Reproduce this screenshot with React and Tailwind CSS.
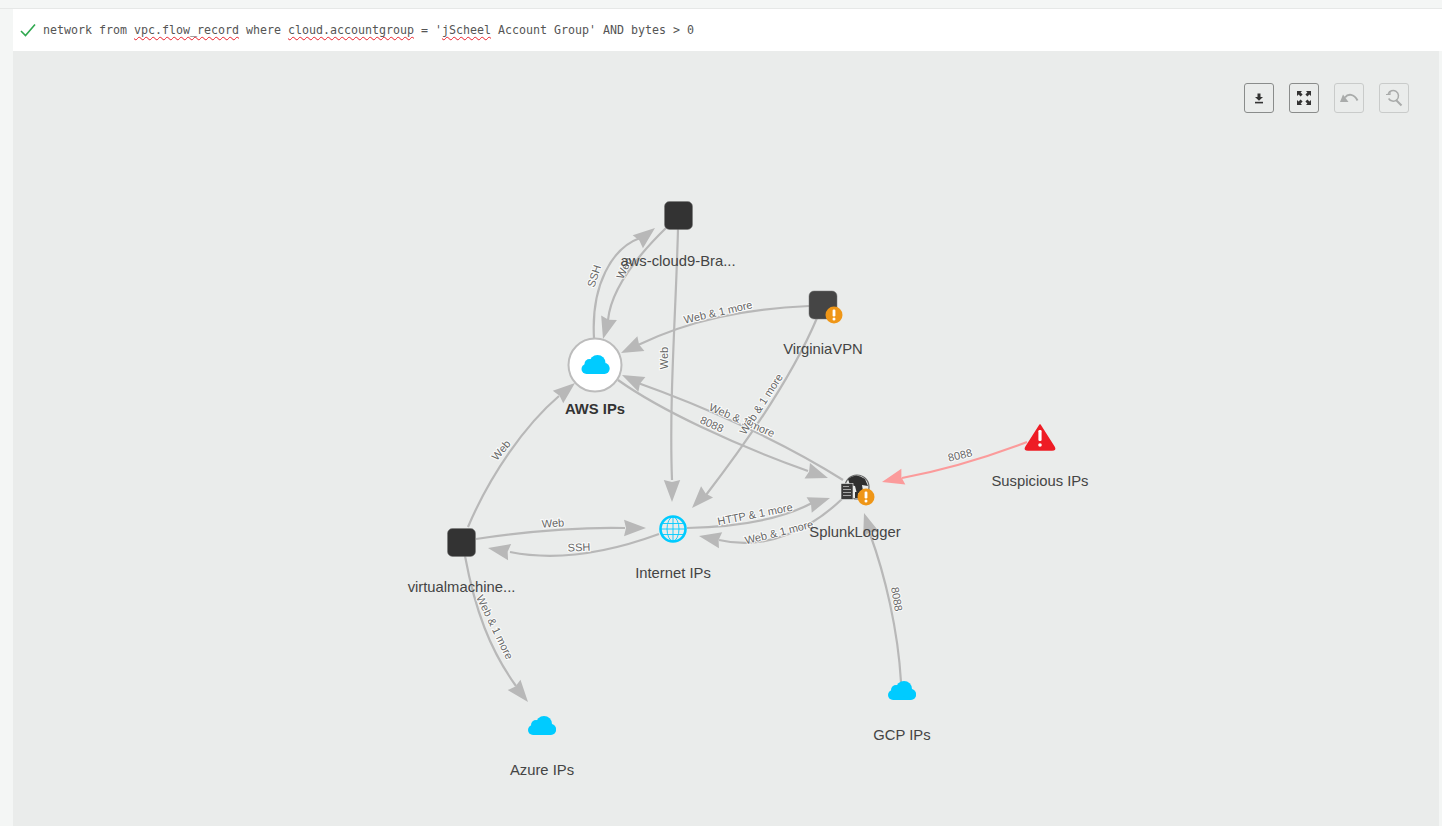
const GREY = "#b8b8b8";

const edges = [
  { d: "M594 338 C591 285 612 248 640 238", head: [655, 228, 640, 240], c: GREY },
  { d: "M667 227 C635 258 611 290 608 320", head: [603, 339, 609, 318], c: GREY },
  { d: "M678 229 C676 310 669 400 672 480", head: [672, 502, 672, 480], c: GREY },
  { d: "M809 306 C745 309 690 320 638 345", head: [621, 353, 640, 344], c: GREY },
  { d: "M817 318 C795 370 760 425 706 495", head: [692, 508, 707, 492], c: GREY },
  { d: "M843 480 C780 440 700 405 638 383", head: [622, 375, 641, 384], c: GREY },
  { d: "M618 380 C660 410 735 445 808 471", head: [828, 478, 808, 471], c: GREY },
  { d: "M687 528 C735 527 780 520 812 503", head: [830, 498, 812, 504], c: GREY },
  { d: "M842 499 C815 525 770 552 719 540", head: [699, 536, 719, 540], c: GREY },
  { d: "M1027 442 C985 458 945 470 902 478", head: [882, 482, 902, 477], c: "#fb9b9b" },
  { d: "M901 682 C898 630 885 575 870 534", head: [864, 513, 871, 534], c: GREY },
  { d: "M468 527 C490 475 525 425 559 396", head: [575, 383, 558, 397], c: GREY },
  { d: "M476 539 C530 531 580 527 625 528", head: [646, 528, 625, 528], c: GREY },
  { d: "M659 534 C610 552 560 562 510 552", head: [488, 548, 509, 552], c: GREY },
  { d: "M465 556 C475 610 490 650 516 686", head: [528, 702, 515, 686], c: GREY },
];

const edgeLabels = [
  ["SSH", 594, 276, -72],
  ["Web", 624, 268, -66],
  ["Web & 1 more", 718, 312, -13],
  ["Web", 664, 358, -90],
  ["Web & 1 more", 742, 420, 23],
  ["8088", 712, 424, 24],
  ["Web & 1 more", 761, 404, -57],
  ["HTTP & 1 more", 755, 514, -11],
  ["Web & 1 more", 779, 532, -14],
  ["8088", 960, 455, -14],
  ["8088", 897, 599, 80],
  ["Web", 501, 450, -50],
  ["Web", 553, 523, -4],
  ["SSH", 579, 547, -2],
  ["Web & 1 more", 495, 627, 64],
];

const nodeLabels = [
  ["aws-cloud9-Bra...", 678, 265.5],
  ["VirginiaVPN", 823, 354],
  ["Internet IPs", 673, 578],
  ["SplunkLogger", 855, 537],
  ["Suspicious IPs", 1040, 486],
  ["virtualmachine...", 461.5, 592],
  ["Azure IPs", 542, 775],
  ["GCP IPs", 902, 740],
];

function Head({ points, color }) {
  const [tx, ty, bx, by] = points;
  const dx = tx - bx;
  const dy = ty - by;
  const len = Math.hypot(dx, dy);
  const ux = dx / len;
  const uy = dy / len;
  const w = 8.2;
  const backX = tx - ux * 22;
  const backY = ty - uy * 22;
  const notchX = tx - ux * 20;
  const notchY = ty - uy * 20;
  return (
    <polygon
      fill={color}
      points={`${tx},${ty} ${backX - uy * w},${backY + ux * w} ${notchX},${notchY} ${backX + uy * w},${backY - ux * w}`}
    />
  );
}

function Cloud({ cx, cy }) {
  return (
    <g transform={`translate(${cx - 14} ${cy - 10})`} fill="#00cbff">
      <rect x="0" y="9" width="28" height="10" rx="5" />
      <circle cx="8" cy="9" r="5" />
      <circle cx="16" cy="8" r="8" />
      <circle cx="23" cy="13" r="5" />
    </g>
  );
}

function Badge({ cx, cy }) {
  return (
    <g>
      <circle cx={cx} cy={cy} r="8.5" fill="#ef9617" />
      <rect x={cx - 1.4} y={cy - 5.5} width="2.8" height="7" rx="1.2" fill="#fff" />
      <circle cx={cx} cy={cy + 4} r="1.5" fill="#fff" />
    </g>
  );
}

function Square({ cx, cy, fill }) {
  return <rect x={cx - 14} y={cy - 14} width="28" height="28" rx="5" fill={fill} stroke="#777" strokeWidth="0.5" />;
}

function Graph() {
  return (
    <svg
      className="absolute left-0 top-0 w-[1426px] h-[775px]"
      viewBox="13 51 1426 775"
      style={{ fontFamily: '"Liberation Sans", Arial, sans-serif' }}
    >
      {edges.map((e, i) => (
        <g key={i}>
          <path d={e.d} fill="none" stroke={e.c} strokeWidth="2.2" />
          <Head points={e.head} color={e.c} />
        </g>
      ))}

      {edgeLabels.map(([t, x, y, r], i) => (
        <text
          key={i}
          transform={`translate(${x} ${y}) rotate(${r})`}
          textAnchor="middle"
          dominantBaseline="central"
          fontSize="11"
          fill="#666666"
          stroke="#ffffff"
          strokeWidth="2"
          strokeOpacity="0.85"
          paintOrder="stroke"
        >
          {t}
        </text>
      ))}

      <Square cx={678.5} cy={215.5} fill="#333333" />
      <Square cx={823} cy={305} fill="#454545" />
      <Badge cx={834} cy={315} />
      <Square cx={461.5} cy={542.5} fill="#333333" />

      <circle cx="595" cy="365" r="26.5" fill="#ffffff" stroke="#bcbcbc" strokeWidth="2" />
      <Cloud cx={595.5} cy={365} />
      <Cloud cx={542} cy={726} />
      <Cloud cx={902} cy={691} />

      <circle cx="673" cy="529" r="13" fill="#eaeceb" />
      <g fill="none" stroke="#00cbff">
        <circle cx="673" cy="529" r="12.5" strokeWidth="2.6" />
        <ellipse cx="673" cy="529" rx="6" ry="12" strokeWidth="0.9" />
        <path d="M673 517 V541 M661 529 H685 M663 523.5 H683 M663 534.5 H683" strokeWidth="0.9" />
      </g>

      <path d="M1040 425 L1054 447 Q1056 450 1052 450 L1028 450 Q1024 450 1026 447 Z" fill="#ee1c25" stroke="#ee1c25" strokeWidth="1.5" strokeLinejoin="round" />
      <rect x="1038.4" y="430" width="3.2" height="11" rx="1.2" fill="#fff" />
      <circle cx="1040" cy="445" r="1.8" fill="#fff" />

      <circle cx="857" cy="487" r="12" fill="#eaeceb" stroke="#666" strokeWidth="1.2" />
      <path d="M848 479 Q856 472 865 479 L868 486 L862 485 L863 491 L857 494 L855 486 L850 485 Z" fill="#2f2f2f" />
      <rect x="855" y="492" width="3" height="6" fill="#2f2f2f" />
      <rect x="841" y="483.5" width="12" height="16" fill="#3a3a3a" stroke="#eaeceb" strokeWidth="0.6" />
      <path d="M843 486.5 H849 M843 489.5 H851 M843 492.5 H851 M843 495.5 H851" stroke="#a5a5a5" strokeWidth="1" />
      <Badge cx={866} cy={497} />

      <text x="595" y="414" textAnchor="middle" fontSize="14.8" fontWeight="700" fill="#333333">
        AWS IPs
      </text>
      {nodeLabels.map(([t, x, y]) => (
        <text key={t} x={x} y={y} textAnchor="middle" fontSize="14.8" fill="#444444">
          {t}
        </text>
      ))}
    </svg>
  );
}

function ToolButton({ disabled, children }) {
  return (
    <button
      className={
        disabled
          ? "w-[30px] h-[30px] rounded-[3px] border border-[#c9cbca] flex items-center justify-center"
          : "w-[30px] h-[30px] rounded-[3px] border border-[#8a8c8b] flex items-center justify-center"
      }
    >
      {children}
    </button>
  );
}

function Squiggle({ children }) {
  return <span className="underline decoration-wavy decoration-[#e8202a] decoration-1 underline-offset-2">{children}</span>;
}

export default function App() {
  return (
    <div className="w-[1442px] h-[826px] overflow-hidden bg-[#f4f6f5] flex flex-col">
      <div className="h-[9px] shrink-0 border-b border-[#e6e8e7]" />
      <div className="pl-[13px] flex flex-col flex-1">
        <div className="h-[42px] shrink-0 bg-white flex items-center pl-[7px]">
          <svg width="16" height="14" viewBox="0 0 16 14" className="shrink-0">
            <path d="M1 8 L5.5 12.5 L15 1.5" fill="none" stroke="#2fa84f" strokeWidth="1.6" />
          </svg>
          <span
            className="ml-[7px] pt-[2px] text-[11.63px] text-[#555555] whitespace-pre"
            style={{ fontFamily: '"DejaVu Sans Mono", "Liberation Mono", monospace' }}
          >
            network from <Squiggle>vpc.flow_record</Squiggle> where <Squiggle>cloud.accountgroup</Squiggle> = '<Squiggle>jScheel</Squiggle> Account Group' AND bytes {">"} 0
          </span>
        </div>
        <div className="relative flex-1 mr-[3px] bg-[#eaeceb]">
          <Graph />
          <div className="relative flex justify-end gap-[15px] pt-[32px] pr-[30px]">
            <ToolButton>
              <svg width="12" height="12" viewBox="0 0 12 12" fill="#333">
                <path d="M4.5 1.5 H7.5 V5 H10 L6 8.8 L2 5 H4.5 Z" />
                <rect x="2" y="9.8" width="8" height="1.6" />
              </svg>
            </ToolButton>
            <ToolButton>
              <svg width="16" height="16" viewBox="0 0 16 16" fill="#333">
                <path d="M1 1 H6 L4.6 2.6 L6.6 4.6 L4.6 6.6 L2.6 4.6 L1 6 Z" />
                <path d="M15 1 H10 L11.4 2.6 L9.4 4.6 L11.4 6.6 L13.4 4.6 L15 6 Z" />
                <path d="M1 15 H6 L4.6 13.4 L6.6 11.4 L4.6 9.4 L2.6 11.4 L1 10 Z" />
                <path d="M15 15 H10 L11.4 13.4 L9.4 11.4 L11.4 9.4 L13.4 11.4 L15 10 Z" />
              </svg>
            </ToolButton>
            <ToolButton disabled>
              <svg width="20" height="14" viewBox="0 0 20 14">
                <path d="M1 11 L4 3.5 L9.5 11 Z" fill="#a9abaa" />
                <path d="M6 6.5 C9 2.5 15 2.5 18.5 9.5" fill="none" stroke="#a9abaa" strokeWidth="2" />
              </svg>
            </ToolButton>
            <ToolButton disabled>
              <svg width="18" height="18" viewBox="0 0 18 18" fill="none" stroke="#a9abaa" strokeWidth="1.5">
                <path d="M3.2 5 A5.3 5.3 0 1 1 3.6 9.5" />
                <path d="M1 5.5 H5 V2" strokeWidth="1.2" />
                <path d="M11 11 L16.5 16.5" strokeWidth="2" />
              </svg>
            </ToolButton>
          </div>
        </div>
      </div>
    </div>
  );
}
